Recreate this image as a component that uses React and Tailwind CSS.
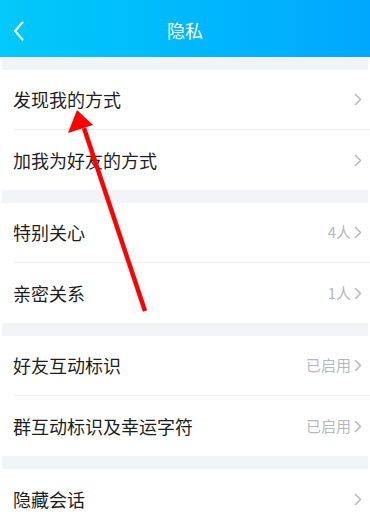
import React from "react";

const Chevron = () => (
  <svg width="8" height="13" viewBox="0 0 8 13" className="ml-[3px]">
    <path d="M1.5 1.5 L6.5 6.5 L1.5 11.5" fill="none" stroke="#b4b6c0" strokeWidth="1.5" strokeLinecap="round" strokeLinejoin="round" />
  </svg>
);

const Row = ({ label, value, last }) => (
  <div className="h-[60px] flex items-stretch bg-white pl-[13px]">
    <div className={`flex-1 flex items-center pr-[8px] ${last ? "" : "border-b border-[#eeeff3]"}`}>
      <span className="flex-1 text-[18px] text-[#1e1e1e]">{label}</span>
      {value && <span className="text-[15px] text-[#b6b7be]">{value}</span>}
      <Chevron />
    </div>
  </div>
);

const Gap = () => <div className="h-[13px] bg-[#f3f4f8] mx-[2px]" />;

export default function App() {
  return (
    <div
      className="relative w-[370px] h-[527px] overflow-hidden bg-white"
      style={{ fontFamily: '"Noto Sans CJK SC", "Noto Sans", sans-serif' }}
    >
      <div className="h-[57px] flex items-center relative bg-gradient-to-r from-[#02caf9] to-[#00a7fe]">
        <svg width="12" height="20" viewBox="0 0 12 20" className="absolute left-[13px] top-[21px]">
          <path d="M9.5 1.5 L2 10 L9.5 18.5" fill="none" stroke="white" strokeWidth="2" strokeLinecap="round" strokeLinejoin="round" />
        </svg>
        <div className="flex-1 text-center text-white text-[18px] pt-[3px]">隐私</div>
      </div>
      <Gap />
      <Row label="发现我的方式" />
      <Row label="加我为好友的方式" last />
      <Gap />
      <Row label="特别关心" value="4人" />
      <Row label="亲密关系" value="1人" last />
      <Gap />
      <Row label="好友互动标识" value="已启用" />
      <Row label="群互动标识及幸运字符" value="已启用" last />
      <Gap />
      <Row label="隐藏会话" last />
      <svg className="absolute left-0 top-0 pointer-events-none" width="370" height="527" viewBox="0 0 370 527">
        <line x1="145" y1="311" x2="84" y2="128" stroke="#ff0000" strokeWidth="4.5" />
        <polygon points="77,110 68,133 93,125" fill="#ff0000" />
      </svg>
    </div>
  );
}
